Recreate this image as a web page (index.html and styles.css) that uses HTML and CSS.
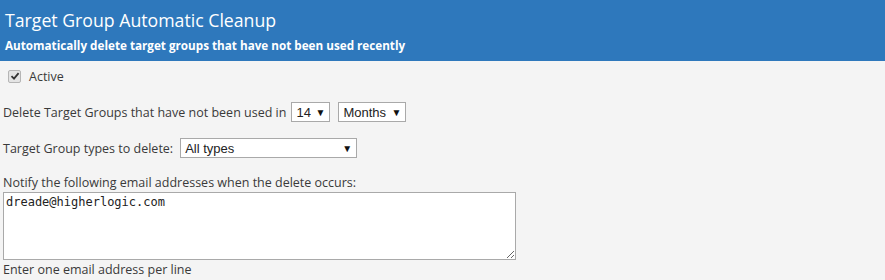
FILE: index.html
```html
<!DOCTYPE html>
<html lang="en">
<head>
    <meta charset="UTF-8">
    <title>Target Group Automatic Cleanup</title>
    <link rel="stylesheet" href="styles.css">
</head>
<body>

    <div class="cabecera">
        <h1>Target Group Automatic Cleanup</h1>
        <p>Automatically delete target groups that have not been used recently</p>
    </div>

    <div class="contenido">
        <div class="fila activo">
            <span class="casilla">
                <svg width="10" height="10" viewBox="0 0 10 10"><path d="M1.5 5.2 L4 7.6 L8.6 2.2" fill="none" stroke="#333" stroke-width="1.8"/></svg>
            </span>
            <label>Active</label>
        </div>

        <div class="fila">
            <span>Delete Target Groups that have not been used in</span>
            <span class="lista num"><select><option>14</option></select></span>
            <span class="lista meses"><select><option>Months</option></select></span>
        </div>

        <div class="fila">
            <span>Target Group types to delete:</span>
            <span class="lista tipos"><select><option>All types</option></select></span>
        </div>

        <div class="notificar">
            <label for="correos">Notify the following email addresses when the delete occurs:</label>
            <textarea id="correos">dreade@higherlogic.com</textarea>
            <div class="ayuda">Enter one email address per line</div>
        </div>
    </div>

</body>
</html>
```

FILE: styles.css
```css
body {
    margin: 0;
    background-color: #f4f4f4;
    font-family: "Open Sans", sans-serif;
    font-size: 12.5px;
    color: #3a3a3a;
}
.cabecera {
    background: #2e78bc;
    color: #fff;
    height: 61px;
    padding: 0 5px;
    box-sizing: border-box;
}
.cabecera h1 {
    margin: 0;
    padding-top: 7px;
    font-size: 17.7px;
    font-weight: normal;
    line-height: 26px;
}
.cabecera p {
    margin: 0;
    padding-top: 2px;
    font-size: 11.7px;
    font-weight: bold;
    line-height: 20px;
}
.contenido {
    padding: 0 3px;
}
.fila {
    display: flex;
    align-items: center;
    height: 20px;
    margin-top: 16px;
}
.activo {
    margin-top: 5px;
    padding-left: 5px;
}
.casilla {
    display: inline-flex;
    align-items: center;
    justify-content: center;
    width: 11px;
    height: 11px;
    margin-right: 8px;
    background: #e4e4e4;
    border: 1px solid #b5b5b5;
    border-radius: 2px;
}
.lista {
    position: relative;
    margin-left: 5px;
}
.meses {
    margin-left: 8px;
}
.tipos {
    margin-left: 7px;
}
.lista select {
    appearance: none;
    font-family: "Liberation Sans", Arial, sans-serif;
    font-size: 13px;
    color: #222;
    background: #fff;
    border: 1px solid #a9a9a9;
    border-radius: 0;
    height: 20px;
    padding: 0 18px 0 4px;
}
.lista::after {
    content: "▼";
    position: absolute;
    right: 5px;
    top: 3px;
    font-size: 10px;
    color: #111;
    pointer-events: none;
}
.num select { width: 39px; }
.meses select { width: 68px; }
.tipos select { width: 177px; }
.notificar {
    margin-top: 16px;
}
.notificar label {
    display: block;
    line-height: 18px;
}
.notificar textarea {
    display: block;
    width: 513px;
    height: 68px;
    box-sizing: border-box;
    margin: 0;
    border: 1px solid #a9a9a9;
    padding: 2px;
    font-family: "DejaVu Sans Mono", monospace;
    font-size: 12px;
    color: #222;
}
.ayuda {
    margin-top: 1px;
    line-height: 18px;
}
```
